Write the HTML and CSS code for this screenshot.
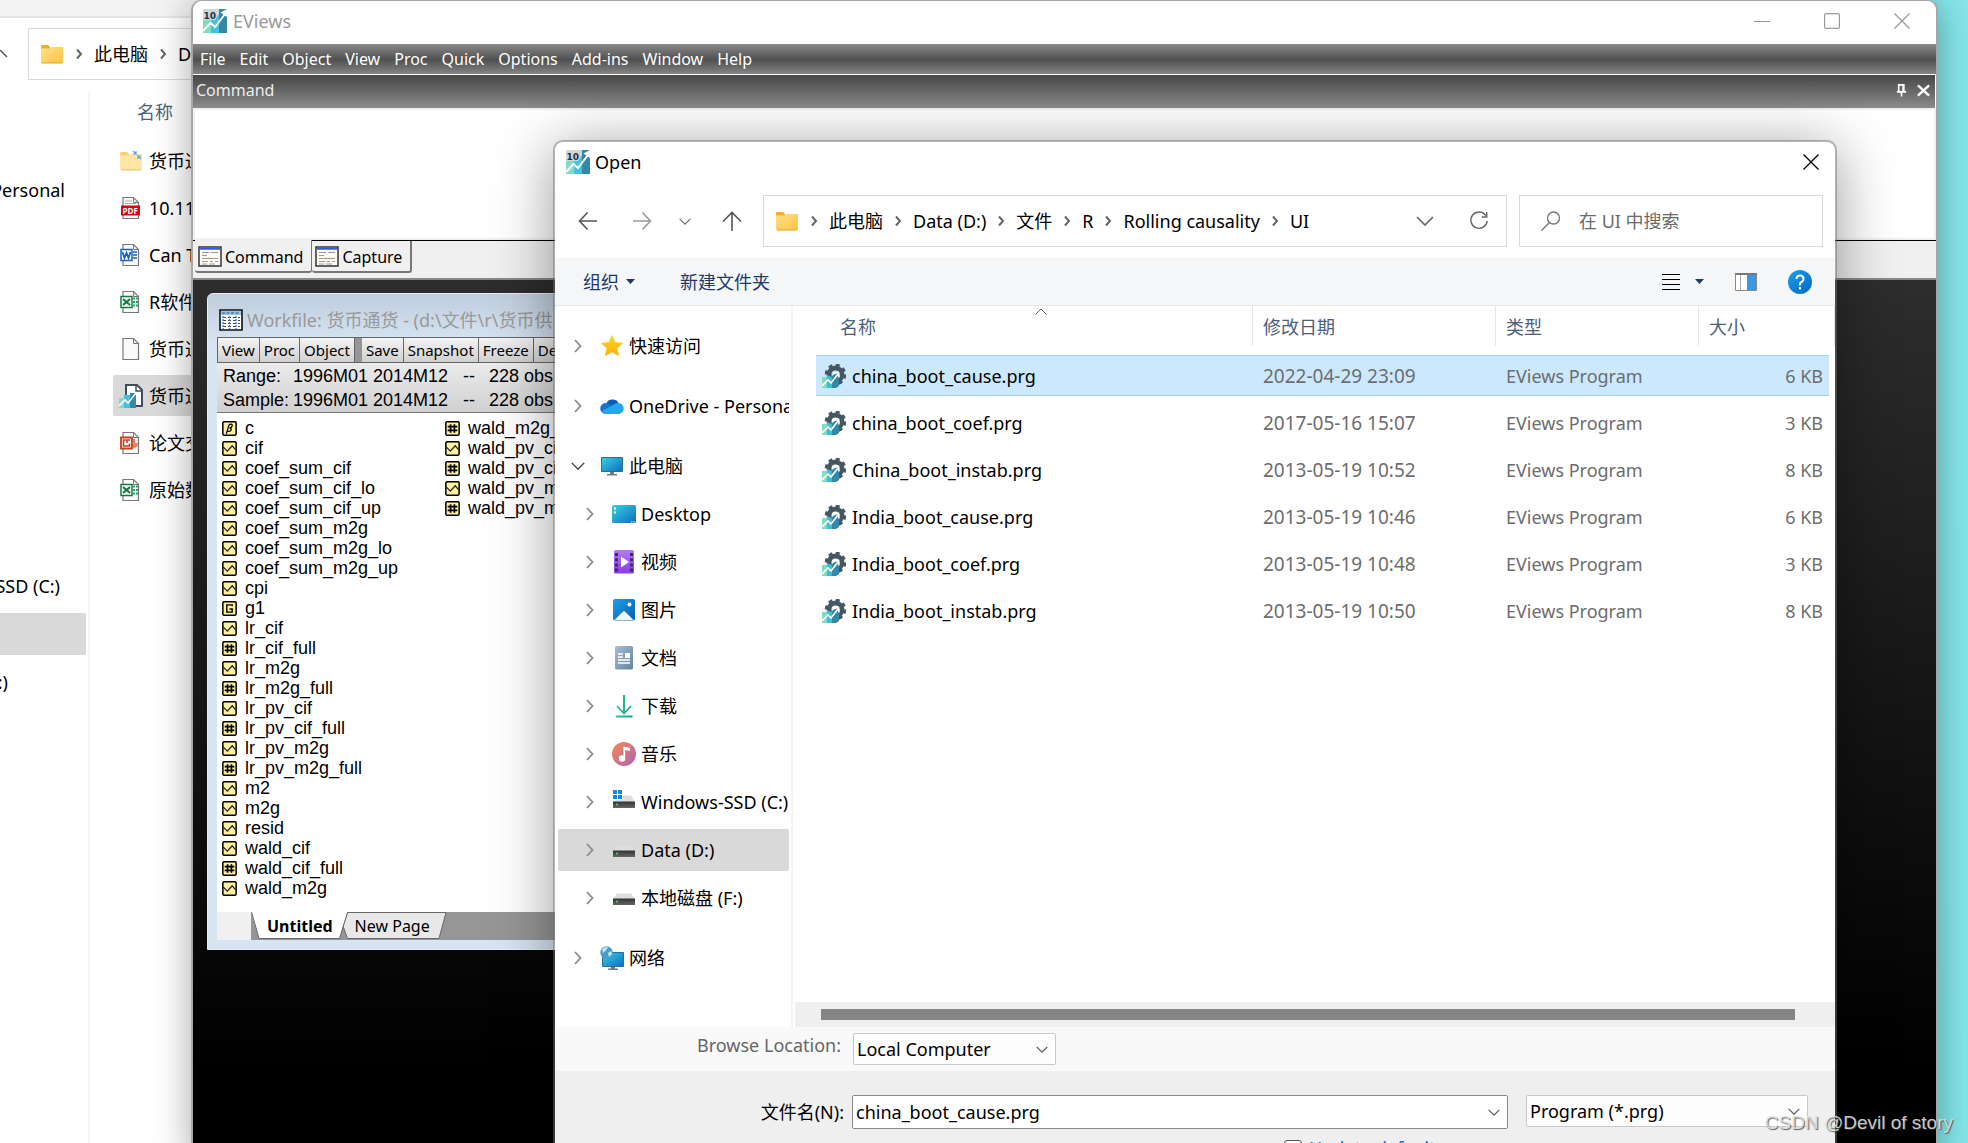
FILE: index.html
```html
<!DOCTYPE html>
<html lang="zh-CN">
<head>
<meta charset="utf-8">
<title>EViews - Open</title>
<link rel="stylesheet" href="styles.css">
</head>
<body>
<svg class="defs" aria-hidden="true">
  <defs>
    <linearGradient id="gFolder" x1="0" y1="0" x2="1" y2="1"><stop offset="0" stop-color="#ffe08c"/><stop offset="1" stop-color="#fdc440"/></linearGradient>
    <linearGradient id="gScreen" x1="0" y1="0" x2="1" y2="1"><stop offset="0" stop-color="#35d3e2"/><stop offset="1" stop-color="#0f6cbd"/></linearGradient>
    <linearGradient id="gVideo" x1="0" y1="0" x2="0" y2="1"><stop offset="0" stop-color="#b47af2"/><stop offset="1" stop-color="#8a3de6"/></linearGradient>
    <linearGradient id="gPhoto" x1="0" y1="0" x2="1" y2="1"><stop offset="0" stop-color="#1a9fe8"/><stop offset="1" stop-color="#0a5fb4"/></linearGradient>
    <linearGradient id="gDoc" x1="0" y1="0" x2="1" y2="1"><stop offset="0" stop-color="#a9bfd4"/><stop offset="1" stop-color="#65829f"/></linearGradient>
    <linearGradient id="gMusic" x1="0" y1="0" x2="1" y2="1"><stop offset="0" stop-color="#f48b54"/><stop offset="1" stop-color="#b062b4"/></linearGradient>
    <linearGradient id="gDown" x1="0" y1="0" x2="1" y2="0"><stop offset="0" stop-color="#34c878"/><stop offset="1" stop-color="#12a0a8"/></linearGradient>
    <linearGradient id="gStar" x1="0" y1="0" x2="0" y2="1"><stop offset="0" stop-color="#ffd91a"/><stop offset="1" stop-color="#fbb014"/></linearGradient>
    <linearGradient id="gHelp" x1="0" y1="0" x2="1" y2="1"><stop offset="0" stop-color="#1a9fe8"/><stop offset="1" stop-color="#0068c8"/></linearGradient>
    <linearGradient id="gDrive" x1="0" y1="0" x2="0" y2="1"><stop offset="0" stop-color="#333"/><stop offset="1" stop-color="#666"/></linearGradient>
  </defs>
  <symbol id="logo" viewBox="0 0 24 24">
    <path fill="#83dcc0" d="M0 10h8v14H0z"/><path fill="#45c1dd" d="M8 5h8v19H8z"/><path fill="#3388a8" d="M16 0h8v24h-8z"/>
    <path fill="#d3d6d8" d="M0 0h16v5l-4 6H0z"/>
    <text x="0.500" y="10" font-family="DejaVu Sans, sans-serif" font-size="9" font-weight="700" fill="#14344a">10</text>
    <path fill="none" stroke="#fff" stroke-width="2" d="M0 22l7.500-8 4.500 4L22 5"/><path fill="#fff" d="M17.500 3.500L24 0v8z"/>
  </symbol>
  <symbol id="prg" viewBox="0 0 24 24">
    <circle cx="13.500" cy="10.500" r="6.500" fill="none" stroke="#465764" stroke-width="5"/>
    <circle cx="13.500" cy="10.500" r="9.500" fill="none" stroke="#465764" stroke-width="2.600" stroke-dasharray="4 3.460"/>
    <path fill="#7edcc0" d="M0 13h5v11H0z"/><path fill="#3bbcd8" d="M5 11l5 2h3v11H5z"/><path fill="#3388a8" d="M10 12l7-5v15l-3 2h-4z"/>
    <path fill="none" stroke="#fff" stroke-width="1.600" d="M0 22l6-6 3 3 7-9M11.500 9.500l5-1 .5 5"/>
  </symbol>
  <symbol id="wf" viewBox="0 0 24 24">
    <path fill="#fff" stroke="#3d4f5d" stroke-width="2" d="M7 1h11l5 5v16H7z"/><path fill="none" stroke="#3d4f5d" stroke-width="1.500" d="M17 1v6h6"/>
    <path fill="#7edcc0" d="M0 14h5v10H0z"/><path fill="#45c1dd" d="M5 11h6v13H5z"/><path fill="#3388a8" d="M11 9h6v15h-6z"/>
    <path fill="none" stroke="#fff" stroke-width="1.600" d="M0 22l6-6 3 3 8-10"/>
  </symbol>
  <symbol id="folder" viewBox="0 0 24 24"><path fill="#f4b01c" d="M1 4q0-1 1-1h6l2 2v4H1z"/><path fill="url(#gFolder)" d="M1 6.500h9L11.500 5H23v15q0 1-1 1H2q-1 0-1-1z"/><path stroke="#e0a020" d="M2 21h20"/></symbol>
  <symbol id="folderopen" viewBox="0 0 24 24"><path fill="#f7d47c" d="M1 4q0-1 1-1h6l2 2v4H1z"/><path fill="#fde6a6" d="M1 6.500h9L11.500 5H23v15q0 1-1 1H2q-1 0-1-1z"/><path stroke="#e8c060" d="M2 21h20"/><path stroke="#58a8dc" stroke-width="1.200" fill="none" d="M14 2l3 3v-3M17 5h-3M22 10l-3-3v3M19 7h3"/></symbol>
  <symbol id="page" viewBox="0 0 24 24"><path fill="#fafafa" stroke="#777" stroke-width="1.200" d="M4 1.500h10.500l5 5v16H4z"/><path fill="none" stroke="#777" d="M14.500 1.500v5h5"/></symbol>
  <symbol id="pdf" viewBox="0 0 24 24"><use href="#page"/><path stroke="#aaa" d="M6 5h7M6 7.500h11"/><path fill="#e00012" d="M2 9.500h19v10H2z"/><text x="3.500" y="17.500" font-family="Open Sans, sans-serif" font-size="8" font-weight="700" fill="#fff">PDF</text></symbol>
  <symbol id="word" viewBox="0 0 24 24"><use href="#page"/><path stroke="#1a62c0" stroke-width="1.300" d="M14 9h4M14 12h4M14 15h4"/><path fill="#fff" stroke="#1a62c0" stroke-width="1.500" d="M2 6.500h11v11H2z"/><path fill="none" stroke="#1a62c0" stroke-width="1.800" d="M3.500 9l2 6 2-5 2 5 2-6"/></symbol>
  <symbol id="excel" viewBox="0 0 24 24"><use href="#page"/><path stroke="#21a565" stroke-width="1.800" stroke-dasharray="2 1" d="M14 8.500h5M14 12h5M14 15.500h5"/><path fill="#fff" stroke="#107c41" stroke-width="1.500" d="M2 6.500h11v11H2z"/><path stroke="#107c41" stroke-width="2.200" d="M4 9l7 6M11 9l-7 6"/></symbol>
  <symbol id="ppt" viewBox="0 0 24 24"><use href="#page"/><path fill="#f08060" d="M14 8h2v4h3v2q-1 3-5 3z"/><path fill="#fff" stroke="#c43e1c" stroke-width="1.800" d="M2 6.500h11v11H2z"/><path fill="none" stroke="#c43e1c" stroke-width="1.600" d="M7 9H4.500v6h6v-2.500M8 12V9h3"/></symbol>
  <symbol id="star" viewBox="0 0 24 24"><path fill="url(#gStar)" d="M12 .8l3.300 7.200 7.900.9-5.800 5.400 1.600 7.900-7-3.900-7 3.900 1.600-7.900L.8 8.900l7.900-.9z"/></symbol>
  <symbol id="cloud" viewBox="0 0 24 24"><path fill="#0a5db8" d="M6 10a7 7 0 0 1 13 0l-3 6H6z"/><path fill="#1473d0" d="M5.500 9Q9 9 11 11l8 6-13 3a5.500 5.500 0 0 1-.5-11z"/><path fill="#29a4ea" d="M2 17l11-6q2-2 5-2a5.500 5.500 0 0 1 .5 11H6q-3 0-4-3z"/></symbol>
  <symbol id="pc" viewBox="0 0 24 24"><path fill="url(#gScreen)" stroke="#2a6e96" d="M1.500 3.500h21v14h-21z"/><path fill="#6b7c88" d="M10 18h4v2h3v1.500H7V20h3z"/></symbol>
  <symbol id="desktop" viewBox="0 0 24 24"><rect y="3" width="24" height="18" rx="1.500" fill="url(#gScreen)"/><path fill="#fff" d="M2 5.500h2v2H2zM2 9.500h2v2H2z"/><path stroke="#fff" stroke-dasharray="1.500 1" d="M19 20h4"/></symbol>
  <symbol id="video" viewBox="0 0 24 24"><rect x="2" width="20" height="23.500" rx="1.500" fill="url(#gVideo)"/><path stroke="#42247a" stroke-width="3" stroke-dasharray="3 2.200" d="M4.500 3v19M19.500 3v19"/><path fill="#fff" d="M9 6.500l8 5.500-8 5.500z"/></symbol>
  <symbol id="photo" viewBox="0 0 24 24"><rect x="1" y="1" width="22" height="21.500" rx="2" fill="url(#gPhoto)"/><circle cx="17.500" cy="6.500" r="2" fill="#fff"/><path fill="#f2f7fb" d="M2.500 22L11 13.500q1-1 2 0L21.500 22z"/></symbol>
  <symbol id="doc" viewBox="0 0 24 24"><rect x="3" width="18" height="23.500" rx="1.500" fill="url(#gDoc)"/><path stroke="#fff" stroke-width="1.300" d="M6 8h5M6 11h5M6 14h12M6 17h12"/><path fill="#fff" d="M13 7h5v5h-5z"/></symbol>
  <symbol id="down" viewBox="0 0 24 24"><path fill="none" stroke="url(#gDown)" stroke-width="1.800" d="M5 12l7 7.500 7-7.500M4 22.500h16.500"/><path fill="#25b48c" d="M11 1h2v18h-2z"/></symbol>
  <symbol id="music" viewBox="0 0 24 24"><circle cx="12" cy="12" r="12" fill="url(#gMusic)"/><circle cx="10" cy="16.500" r="3.200" fill="#fff"/><path fill="#fff" d="M11.400 4.500l6.600 1.500v3l-4.800-1v8.500h-1.800z"/></symbol>
  <symbol id="drive" viewBox="0 0 24 24"><path fill="#dcdee2" d="M5 7.500h14L23 13H1z"/><path fill="url(#gDrive)" d="M1 12.500h22V19H1z"/><path fill="#2adf3c" d="M4 14.500h2v2H4z"/></symbol>
  <symbol id="windrive" viewBox="0 0 24 24"><path fill="#dcdee2" d="M11 5.500h8L23 12H1z"/><path fill="url(#gDrive)" d="M1 11.500h22V18H1z"/><path fill="#2adf3c" d="M4 13.500h2v2H4z"/><path fill="#fff" d="M0 0h11v10H0z"/><path fill="#1488dc" d="M1 0h4v4H1zM6 0h4v4H6zM1 5h4v4H1zM6 5h4v4H6z"/></symbol>
  <symbol id="network" viewBox="0 0 24 24"><path fill="url(#gScreen)" stroke="#2a6e96" d="M2.500 6.500h21v14h-21z"/><path fill="#6b7c88" d="M11 21h4v1.500h3V24H8v-1.500h3z"/><circle cx="6.500" cy="6.500" r="6.200" fill="#4a9cc8"/><path fill="#c4e6f4" d="M2 3.500Q5 0 8 1.500L5.500 5 3 7zM8 7l3-2 1 3-3 3z"/></symbol>
  <symbol id="right" viewBox="0 0 8 14"><path fill="none" stroke="currentColor" stroke-width="1.800" d="M1 1l5.500 6L1 13"/></symbol>
  <symbol id="crumb" viewBox="0 0 8 12"><path fill="none" stroke="currentColor" stroke-width="2" d="M2 1.500L6 6l-4 4.500"/></symbol>
  <symbol id="chev" viewBox="0 0 18 10"><path fill="none" stroke="currentColor" stroke-width="1.700" d="M1 1l8 8 8-8"/></symbol>
  <symbol id="caret" viewBox="0 0 9 5"><path fill="currentColor" d="M0 0h9L4.500 5z"/></symbol>
  <symbol id="close" viewBox="0 0 16 16"><path stroke="currentColor" stroke-width="1.300" d="M.5.5l15 15M15.500.5l-15 15"/></symbol>
  <symbol id="cmdwin" viewBox="0 0 24 21"><path fill="#fefbf0" stroke="#333" stroke-width="1.500" d="M1 1h22v19H1z"/><path stroke="#3355f0" stroke-width="1.800" d="M2 2.800h20"/><path stroke="#999" d="M4 6.500h7M13 6.500h7M4 9.500h5M4 12.500h16M4 15.500h6M12 15.500h3M17 15.500h3M4 18h5M11 18h6"/></symbol>
  <symbol id="series" viewBox="0 0 14 14"><rect x=".8" y=".8" width="12.400" height="12.400" rx="1" fill="#fdf0a0" stroke="#000" stroke-width="1.400"/><path fill="none" stroke="#222" stroke-width="1.200" d="M1 5.500L5 9.500 9.500 4.500l3.500 4"/></symbol>
  <symbol id="scalar" viewBox="0 0 14 14"><rect x=".8" y=".8" width="12.400" height="12.400" rx="1" fill="#fdf0a0" stroke="#000" stroke-width="1.400"/><path stroke="#000" stroke-width="1.600" d="M5.200 3v8M8.800 3v8M2.500 5.300h9M2.500 8.700h9"/></symbol>
  <symbol id="coef" viewBox="0 0 14 14"><rect x=".8" y=".8" width="12.400" height="12.400" rx="1" fill="#fdf0a0" stroke="#000" stroke-width="1.400"/><path fill="none" stroke="#000" stroke-width="1.200" d="M4 12L6.500 4Q7 3 8.500 3t.8 2Q9 6.500 7 6.500q2 0 1.500 2Q8 10 5 9.500"/></symbol>
  <symbol id="group" viewBox="0 0 14 14"><rect x=".8" y=".8" width="12.400" height="12.400" rx="1" fill="#fdf0a0" stroke="#000" stroke-width="1.400"/><path fill="none" stroke="#000" stroke-width="1.300" d="M9.500 5V3.600h-5v6.800h5V7.500H7"/></symbol>
</svg>

<div class="explorer">
  <div class="ex-top"></div>
  <div class="ex-bar">
    <svg class="ex-up" viewBox="0 0 8 8"><path fill="none" stroke="#555" stroke-width="1.500" d="M0 0l7 7"/></svg>
    <div class="ex-address">
      <svg class="i24"><use href="#folder"/></svg>
      <svg class="crumb"><use href="#crumb"/></svg><a href="#">此电脑</a>
      <svg class="crumb"><use href="#crumb"/></svg><a href="#">D</a>
    </div>
  </div>
  <div class="ex-body">
    <ul class="ex-nav">
      <li class="personal">OneDrive - Personal</li>
      <li>Windows-SSD (C:)</li>
      <li class="on"></li>
      <li class="last">(F:)</li>
    </ul>
    <div class="ex-files">
      <div class="ex-head">名称</div>
      <ul>
        <li><svg class="i24"><use href="#folderopen"/></svg>货币通</li>
        <li><svg class="i24"><use href="#pdf"/></svg>10.11</li>
        <li><svg class="i24"><use href="#word"/></svg>Can T</li>
        <li><svg class="i24"><use href="#excel"/></svg>R软件</li>
        <li><svg class="i24"><use href="#page"/></svg>货币通</li>
        <li class="on"><svg class="i24"><use href="#wf"/></svg>货币通</li>
        <li><svg class="i24"><use href="#ppt"/></svg>论文交</li>
        <li><svg class="i24"><use href="#excel"/></svg>原始数</li>
      </ul>
    </div>
  </div>
</div>

<main class="eviews">
  <header class="titlebar">
    <svg class="i24"><use href="#logo"/></svg><h1>EViews</h1>
    <div class="winbtns">
      <button aria-label="Minimize"><svg viewBox="0 0 16 16"><path stroke="currentColor" stroke-width="1.200" d="M0 8.500h16"/></svg></button>
      <button aria-label="Maximize"><svg viewBox="0 0 16 16"><rect x=".6" y=".6" width="14.800" height="14.800" rx="1.500" fill="none" stroke="currentColor" stroke-width="1.200"/></svg></button>
      <button aria-label="Close"><svg><use href="#close"/></svg></button>
    </div>
  </header>
  <nav class="menubar">
    <button>File</button><button>Edit</button><button>Object</button><button>View</button><button>Proc</button><button>Quick</button><button>Options</button><button>Add-ins</button><button>Window</button><button>Help</button>
  </nav>
  <section class="command">
    <div class="cmd-title"><h2>Command</h2>
      <button aria-label="Pin"><svg viewBox="0 0 12 14"><path fill="none" stroke="#fff" stroke-width="1.800" d="M3 8V1h5.500v7M1 8.500h10M6 9v4.500M7.700 1v7"/></svg></button>
      <button aria-label="Close"><svg viewBox="0 0 14 14"><path stroke="#fff" stroke-width="2.600" d="M1 1.500l12 11M13 1.500l-12 11"/></svg></button>
    </div>
    <textarea aria-label="Command"></textarea>
    <div class="cmd-tabs">
      <button class="on"><svg><use href="#cmdwin"/></svg>Command</button><button><svg><use href="#cmdwin"/></svg>Capture</button>
    </div>
  </section>
  <div class="mdi">
    <section class="workfile">
      <header><svg viewBox="0 0 24 22"><path fill="#fff" stroke="#111" stroke-width="1.600" d="M1 1h22v20H1z"/><path fill="#8cc8ea" d="M2 2h20v4H2z"/><path stroke="#456" stroke-dasharray="3 1.500" d="M3 4h18"/><path stroke="#444" stroke-dasharray="3 2" d="M4 8.500h17M4 11.500h17M4 14.500h17M4 17.500h17"/><path stroke="#2a7be0" stroke-width="1.300" stroke-dasharray="2 1" d="M4 7v13M10.500 7v13M17 7v13"/></svg><h2>Workfile: 货币通货 - (d:\文件\r\货币供</h2></header>
      <div class="wf-tools">
        <button>View</button><button>Proc</button><button class="gap">Object</button><button>Save</button><button>Snapshot</button><button>Freeze</button><button>Details+/-</button>
      </div>
      <div class="wf-info">
        <span>Range:</span><span>1996M01 2014M12</span><span>--</span><span>228 obs</span>
        <span>Sample:</span><span>1996M01 2014M12</span><span>--</span><span>228 obs</span>
      </div>
      <ul class="wf-list">
        <li><svg><use href="#coef"/></svg>c</li>
        <li><svg><use href="#series"/></svg>cif</li>
        <li><svg><use href="#series"/></svg>coef_sum_cif</li>
        <li><svg><use href="#series"/></svg>coef_sum_cif_lo</li>
        <li><svg><use href="#series"/></svg>coef_sum_cif_up</li>
        <li><svg><use href="#series"/></svg>coef_sum_m2g</li>
        <li><svg><use href="#series"/></svg>coef_sum_m2g_lo</li>
        <li><svg><use href="#series"/></svg>coef_sum_m2g_up</li>
        <li><svg><use href="#series"/></svg>cpi</li>
        <li><svg><use href="#group"/></svg>g1</li>
        <li><svg><use href="#series"/></svg>lr_cif</li>
        <li><svg><use href="#scalar"/></svg>lr_cif_full</li>
        <li><svg><use href="#series"/></svg>lr_m2g</li>
        <li><svg><use href="#scalar"/></svg>lr_m2g_full</li>
        <li><svg><use href="#series"/></svg>lr_pv_cif</li>
        <li><svg><use href="#scalar"/></svg>lr_pv_cif_full</li>
        <li><svg><use href="#series"/></svg>lr_pv_m2g</li>
        <li><svg><use href="#scalar"/></svg>lr_pv_m2g_full</li>
        <li><svg><use href="#series"/></svg>m2</li>
        <li><svg><use href="#series"/></svg>m2g</li>
        <li><svg><use href="#series"/></svg>resid</li>
        <li><svg><use href="#series"/></svg>wald_cif</li>
        <li><svg><use href="#scalar"/></svg>wald_cif_full</li>
        <li><svg><use href="#series"/></svg>wald_m2g</li>
        <li><svg><use href="#scalar"/></svg>wald_m2g_full</li>
        <li><svg><use href="#series"/></svg>wald_pv_cif</li>
        <li><svg><use href="#scalar"/></svg>wald_pv_cif_full</li>
        <li><svg><use href="#series"/></svg>wald_pv_m2g</li>
        <li><svg><use href="#scalar"/></svg>wald_pv_m2g_full</li>
      </ul>
      <div class="wf-pages">
        <svg viewBox="0 0 200 27"><path fill="#e8e8e8" stroke="#666" d="M96.500.5H195l-7 26H96.500L92 14z"/><path fill="#fff" d="M0 0h96.500l-8 26.500H8z"/><path fill="none" stroke="#666" d="M.5 0L8 26.500h80.500l8-26"/></svg>
        <div class="pages"><button class="on">Untitled</button><button>New Page</button></div>
      </div>
    </section>
  </div>
</main>

<section class="dialog" role="dialog" aria-label="Open">
  <header class="dlg-title"><svg class="i24"><use href="#logo"/></svg><h2>Open</h2><button aria-label="Close"><svg><use href="#close"/></svg></button></header>
  <div class="dlg-nav">
    <button aria-label="Back"><svg viewBox="0 0 20 20"><path fill="none" stroke="#555" stroke-width="1.600" d="M19 10H1.500M9.500 1.500L1.500 10l8 8.500"/></svg></button>
    <button aria-label="Forward"><svg viewBox="0 0 20 20"><path fill="none" stroke="#999" stroke-width="1.600" d="M1 10h17.500M10.500 1.500l8 8.500-8 8.500"/></svg></button>
    <button aria-label="Recent"><svg class="small"><use href="#chev"/></svg></button>
    <button aria-label="Up"><svg viewBox="0 0 20 20"><path fill="none" stroke="#555" stroke-width="1.600" d="M10 20V1.500M1 10.500l9-9 9 9"/></svg></button>
    <div class="address">
      <svg class="i24"><use href="#folder"/></svg>
      <svg class="crumb"><use href="#crumb"/></svg><a href="#">此电脑</a>
      <svg class="crumb"><use href="#crumb"/></svg><a href="#">Data (D:)</a>
      <svg class="crumb"><use href="#crumb"/></svg><a href="#">文件</a>
      <svg class="crumb"><use href="#crumb"/></svg><a href="#">R</a>
      <svg class="crumb"><use href="#crumb"/></svg><a href="#">Rolling causality</a>
      <svg class="crumb"><use href="#crumb"/></svg><a href="#">UI</a>
      <button class="drop" aria-label="Previous locations"><svg><use href="#chev"/></svg></button>
      <button aria-label="Refresh"><svg class="refresh" viewBox="0 0 22 22"><path fill="none" stroke="#666" stroke-width="1.600" d="M18.500 5A9 9 0 1 0 20 11M19.500 1v5.500H14"/></svg></button>
    </div>
    <label class="search"><svg viewBox="0 0 20 20"><circle cx="12.500" cy="7" r="6" fill="none" stroke="#777" stroke-width="1.400"/><path stroke="#777" stroke-width="1.400" d="M8.500 11.500L.5 19.500"/></svg><input type="search" placeholder="在 UI 中搜索" aria-label="在 UI 中搜索"></label>
  </div>
  <div class="dlg-tools">
    <button>组织<svg class="caret"><use href="#caret"/></svg></button>
    <button class="new">新建文件夹</button>
    <button class="view" aria-label="View"><svg class="lines" viewBox="0 0 20 20"><path stroke="#000" d="M1 2.500h18M1 7.500h18M1 12.500h18M1 17.500h18"/></svg><svg class="caret"><use href="#caret"/></svg></button>
    <button aria-label="Preview pane"><svg class="pane" viewBox="0 0 22 18"><path fill="#fff" stroke="#888" d="M.5.5h21v17H.5z"/><path stroke="#777" stroke-width="2" d="M0 1h22"/><path fill="#3c98e4" d="M12 2h9v15h-9z"/><path stroke="#aaa" d="M5.500 2v15"/></svg></button>
    <button aria-label="Help"><svg class="i24" viewBox="0 0 24 24"><circle cx="12" cy="12" r="12" fill="url(#gHelp)"/><path fill="none" stroke="#fff" stroke-width="2" d="M8.500 9q0-3.500 3.500-3.500T15.500 9q0 2-2 3T12 15.500M12 17v2.200"/></svg></button>
  </div>
  <div class="dlg-body">
    <ul class="tree">
      <li><svg class="exp"><use href="#right"/></svg><svg class="i24"><use href="#star"/></svg>快速访问</li>
      <li class="top"><svg class="exp"><use href="#right"/></svg><svg class="i24"><use href="#cloud"/></svg>OneDrive - Personal</li>
      <li class="top open"><svg class="exp"><use href="#chev"/></svg><svg class="i24"><use href="#pc"/></svg>此电脑</li>
      <li class="sub"><svg class="exp"><use href="#right"/></svg><svg class="i24"><use href="#desktop"/></svg>Desktop</li>
      <li class="sub"><svg class="exp"><use href="#right"/></svg><svg class="i24"><use href="#video"/></svg>视频</li>
      <li class="sub"><svg class="exp"><use href="#right"/></svg><svg class="i24"><use href="#photo"/></svg>图片</li>
      <li class="sub"><svg class="exp"><use href="#right"/></svg><svg class="i24"><use href="#doc"/></svg>文档</li>
      <li class="sub"><svg class="exp"><use href="#right"/></svg><svg class="i24"><use href="#down"/></svg>下载</li>
      <li class="sub"><svg class="exp"><use href="#right"/></svg><svg class="i24"><use href="#music"/></svg>音乐</li>
      <li class="sub"><svg class="exp"><use href="#right"/></svg><svg class="i24"><use href="#windrive"/></svg>Windows-SSD (C:)</li>
      <li class="sub on"><svg class="exp"><use href="#right"/></svg><svg class="i24"><use href="#drive"/></svg>Data (D:)</li>
      <li class="sub"><svg class="exp"><use href="#right"/></svg><svg class="i24"><use href="#drive"/></svg>本地磁盘 (F:)</li>
      <li class="top"><svg class="exp"><use href="#right"/></svg><svg class="i24"><use href="#network"/></svg>网络</li>
    </ul>
    <div class="files">
      <table>
        <thead><tr><th class="c-name">名称<svg class="sort" viewBox="0 0 12 7"><path fill="none" stroke="#666" d="M.5 6.500L6 1l5.500 5.500"/></svg></th><th class="c-date">修改日期</th><th class="c-type">类型</th><th class="c-size">大小</th></tr></thead>
        <tbody>
          <tr class="on"><td><span><svg class="i24"><use href="#prg"/></svg>china_boot_cause.prg</span></td><td>2022-04-29 23:09</td><td>EViews Program</td><td>6 KB</td></tr>
          <tr><td><span><svg class="i24"><use href="#prg"/></svg>china_boot_coef.prg</span></td><td>2017-05-16 15:07</td><td>EViews Program</td><td>3 KB</td></tr>
          <tr><td><span><svg class="i24"><use href="#prg"/></svg>China_boot_instab.prg</span></td><td>2013-05-19 10:52</td><td>EViews Program</td><td>8 KB</td></tr>
          <tr><td><span><svg class="i24"><use href="#prg"/></svg>India_boot_cause.prg</span></td><td>2013-05-19 10:46</td><td>EViews Program</td><td>6 KB</td></tr>
          <tr><td><span><svg class="i24"><use href="#prg"/></svg>India_boot_coef.prg</span></td><td>2013-05-19 10:48</td><td>EViews Program</td><td>3 KB</td></tr>
          <tr><td><span><svg class="i24"><use href="#prg"/></svg>India_boot_instab.prg</span></td><td>2013-05-19 10:50</td><td>EViews Program</td><td>8 KB</td></tr>
        </tbody>
      </table>
      <div class="hscroll"><div class="thumb"></div></div>
    </div>
  </div>
  <div class="browse">
    <label for="loc">Browse Location:</label>
    <div class="pick"><select id="loc"><option>Local Computer</option></select><svg><use href="#chev"/></svg></div>
  </div>
  <div class="dlg-foot">
    <div class="name-row">
      <label for="fname">文件名(N):</label>
      <div class="pick name"><input id="fname" type="text" value="china_boot_cause.prg"><svg><use href="#chev"/></svg></div>
      <div class="pick type"><select aria-label="File type"><option>Program (*.prg)</option></select><svg><use href="#chev"/></svg></div>
    </div>
    <label class="update"><input type="checkbox">Update default</label>
  </div>
</section>
<div class="watermark">CSDN @Devil of story</div>
</body>
</html>
```
FILE: styles.css
```css
* { box-sizing: border-box; }
body {
  margin: 0;
  height: 100vh;
  position: relative;
  overflow: hidden;
  background: linear-gradient(110deg, #90e8ee, #84e6ea);
  font: 18px/24px "Noto Sans", "Noto Sans CJK SC", sans-serif;
  color: #000;
}
ul { list-style: none; margin: 0; padding: 0; }
h1, h2 { margin: 0; font-size: inherit; font-weight: 400; }
a { color: inherit; text-decoration: none; }
button {
  border: 0; padding: 0; background: none; color: inherit;
  font: inherit; display: flex; align-items: center; white-space: nowrap;
}
input, select, textarea { font: inherit; color: inherit; border: 0; padding: 0; margin: 0; outline: 0; }
svg { display: block; flex: none; }
.defs { position: absolute; width: 0; height: 0; }
.i24 { width: 24px; height: 24px; }
.crumb { width: 8px; height: 12px; color: #666; }

/* file manager at the back */
.explorer { position: absolute; left: 0; top: 0; bottom: 0; width: 20%; background: #fff; overflow: hidden; }
.ex-top { height: 18px; background: #f3f3f3; border-bottom: 2px solid #e5e5e5; }
.ex-bar { display: flex; align-items: center; padding-top: 10px; }
.ex-up { width: 8px; height: 8px; margin-right: 20px; }
.ex-address {
  flex: 1; height: 52px; border: 1px solid #d9d9d9; white-space: nowrap;
  display: flex; align-items: center; gap: 11px; padding-left: 11px;
}
.ex-body { display: flex; margin-top: 11px; height: 100%; }
.ex-nav { width: 90px; border-right: 2px solid #f5f5f5; padding-top: 78px; overflow: hidden; }
.ex-nav li {
  height: 42px; margin-bottom: 6px; margin-right: 28px; white-space: nowrap;
  display: flex; align-items: center; justify-content: flex-end;
}
.ex-nav .personal { margin-bottom: 354px; margin-right: 23px; }
.ex-nav .on { background: #d9d9d9; margin-right: 2px; border-radius: 0 2px 2px 0; }
.ex-nav .last { margin-right: 80px; }
.ex-files { flex: 1; padding-left: 23px; white-space: nowrap; }
.ex-head { height: 49px; line-height: 42px; padding-left: 24px; color: #4c607a; }
.ex-files li { height: 41px; margin-bottom: 6px; padding-left: 6px; display: flex; align-items: center; gap: 6px; }
.ex-files .on { background: #d9d9d9; border-radius: 2px; }

/* EViews main window */
.eviews {
  position: absolute; left: 191px; right: 30px; top: 0; bottom: -20px;
  display: flex; flex-direction: column; overflow: hidden;
  background: #fff; border: 2px solid #a6a6a6; border-top-width: 1px; border-radius: 10px;
  box-shadow: 0 4px 36px rgba(0, 0, 0, .35);
}
.titlebar { height: 43px; flex: none; display: flex; align-items: center; gap: 6px; padding: 0 26px 3px 10px; color: #999; }
.winbtns { margin-left: auto; display: flex; gap: 54px; }
.winbtns svg { width: 16px; height: 16px; }
.menubar {
  height: 31px; flex: none; display: flex; gap: 14px; padding-left: 7px;
  color: #fff; font-size: 16px; border-bottom: 1px solid #fff;
  background: linear-gradient(#8a8a8a, #505050 52%, #848484);
}
.command { flex: none; background: #f0f0f0; }
.cmd-title {
  height: 33px; display: flex; align-items: center; padding: 0 5px 3px 3px;
  border: solid #fff; border-width: 0 1px 0 0; color: #ececec; font-size: 16px;
  background: linear-gradient(#464646, #8c8c8c);
}
.cmd-title h2 { margin-right: auto; }
.cmd-title svg { width: 13px; height: 13px; margin-left: 9px; }
textarea { display: block; width: calc(100% - 4px); height: 130px; margin: 0 2px; border-top: 2px solid #f0f0f0; background: #fff; resize: none; }
.cmd-tabs { height: 40px; border-top: 1px solid #000; border-bottom: 2px solid #888; display: flex; margin-top: 2px; }
.cmd-tabs button { height: 32px; padding: 1px 8px 0 3px; gap: 3px; font-size: 16px; border: solid #777; border-width: 0 2px 2px 0; border-radius: 0 0 3px 3px; background: #f0f0f0; }
.cmd-tabs .on { margin: -1px 0 0 2px; height: 33px; padding-top: 2px; border-right-width: 1px; }
.cmd-tabs button svg { width: 24px; height: 21px; }
.mdi { flex: 1; position: relative; background: linear-gradient(#2d2d2d, #000 90%); }
.workfile {
  position: absolute; left: 14px; top: 13px; width: 40%;
  border: 1px solid #e8eef4; border-radius: 6px 6px 0 0; padding: 0 8px 9px 9px;
  background: linear-gradient(#c0cddc, #d7e4f2 50px);
}
.workfile header { height: 43px; padding: 9px 0 0 2px; display: flex; align-items: center; gap: 4px; color: #999; white-space: nowrap; overflow: hidden; }
.workfile header svg { width: 24px; height: 22px; }
.wf-tools { display: flex; height: 26px; background: #969696; border: solid #666; border-width: 1px 0 1px 1px; }
.wf-tools button { padding: 0 4px; font-size: 15px; border-right: 1px solid #666; background: linear-gradient(#f4f4f4, #d0d0d0); }
.wf-tools .gap { margin-right: 7px; }
.wf-info {
  height: 50px; padding: 1px 6px; border-bottom: 1px solid #777; background: linear-gradient(#ebebeb, #d0d0d0);
  display: grid; grid-template-columns: 70px 170px 26px auto; grid-auto-rows: 24px;
  font-family: "Liberation Sans", Arial, sans-serif;
}
.wf-list {
  height: 499px; padding: 5px; background: #fff; font: 18px/20px "Liberation Sans", Arial, sans-serif;
  display: grid; grid-template-rows: repeat(24, 20px); grid-auto-flow: column; grid-auto-columns: 223px;
}
.wf-list li { display: flex; align-items: center; gap: 8px; }
.wf-list svg { width: 15px; height: 15px; }
.wf-pages { height: 28px; background: #969696; border-left: 34px solid #f0f0f0; display: grid; }
.wf-pages > * { grid-area: 1 / 1; }
.wf-pages svg { width: 200px; height: 27px; }
.pages { display: flex; padding-left: 16px; gap: 22px; font-size: 16px; }
.pages .on { font-weight: 700; }

/* Open dialog */
.dialog {
  position: absolute; left: 553px; right: 131px; top: 140px; bottom: -60px;
  display: flex; flex-direction: column; overflow: hidden;
  background: #fff; background-clip: padding-box;
  border: 2px solid rgba(110, 110, 110, .5); border-radius: 10px;
  box-shadow: 0 8px 60px rgba(0, 0, 0, .4);
}
.dlg-title { height: 40px; flex: none; display: flex; align-items: center; gap: 5px; padding: 0 16px 0 11px; }
.dlg-title button { margin-left: auto; }
.dlg-title button svg { width: 16px; height: 16px; }
.dlg-nav {
  flex: none; padding: 13px 12px 11px 23px; display: grid;
  grid-template-columns: 54px 47px 43px 41px minmax(0, 1fr) 304px; align-items: center;
}
.dlg-nav button svg { width: 20px; height: 20px; color: #666; }
.dlg-nav button .small { width: 12px; height: 7px; }
.address, .search { height: 52px; border: 1px solid #d9d9d9; display: flex; align-items: center; white-space: nowrap; }
.address { margin-right: 12px; padding: 0 17px 0 11px; gap: 11px; }
.address .drop { margin: 0 24px 0 auto; }
.address .drop svg { width: 18px; height: 10px; }
.search svg { width: 20px; height: 20px; margin: 0 18px 0 21px; }
.search input { flex: 1; min-width: 0; background: none; }
.search input::placeholder { color: #6b6b6b; opacity: 1; }
.dlg-tools { height: 48px; flex: none; display: flex; align-items: center; padding: 0 23px 0 28px; gap: 31px; background: #f4f6f8; border-bottom: 1px solid #e5e7ea; color: #1e3a66; }
.caret { width: 9px; height: 5px; margin-left: 7px; }
.dlg-tools .new { margin-left: 14px; }
.dlg-tools .view { margin-left: auto; }
.view .caret { margin-left: 14px; }
.lines { width: 20px; height: 20px; }
.pane { width: 22px; height: 18px; }
.dlg-body { flex: 1; display: flex; min-height: 0; }
.tree { width: 238px; flex: none; border-right: 2px solid #f5f5f5; padding: 19px 2px 0 3px; }
.tree li { height: 42px; margin-bottom: 6px; padding-left: 16px; display: flex; align-items: center; gap: 5px; overflow: hidden; white-space: nowrap; border-radius: 2px; }
.tree .top { margin-top: 18px; }
.tree .sub { padding-left: 28px; }
.tree .on { background: #d9d9d9; }
.exp { width: 8px; height: 14px; margin-right: 13px; color: #8a8a8a; }
.open .exp { width: 14px; height: 8px; margin: 0 10px 0 -3px; color: #333; }
.files { flex: 1; min-width: 0; display: flex; flex-direction: column; }
table { margin-left: 23px; border-collapse: separate; border-spacing: 0; table-layout: fixed; }
th {
  height: 46px; padding: 0 10px; vertical-align: top; text-align: left; font-weight: 400; line-height: 42px; color: #4c607a;
  background: linear-gradient(#e5e5e5, #e5e5e5) right top / 1px 40px no-repeat;
}
.c-name { padding-left: 24px; position: relative; }
.c-date { width: 243px; }
.c-type { width: 203px; }
.c-size { width: 136px; }
.sort { position: absolute; left: 50%; top: 2px; width: 12px; height: 7px; }
td { height: 47px; padding: 0 10px; border: solid transparent; border-width: 3px 0; background-clip: padding-box; color: #6d6d6d; }
td:first-child { padding-left: 6px; color: #000; }
td:nth-child(2) { font-size: 19px; }
td:last-child { text-align: right; padding-right: 6px; border-right-width: 6px; }
td span { display: flex; align-items: center; gap: 6px; }
.on td { background-color: #cce8ff; box-shadow: inset 0 1px #99d1ff, inset 0 -1px #99d1ff; }
.hscroll { margin: auto 0 0 2px; height: 25px; padding: 7px 40px 7px 26px; background: #efefef; }
.thumb { height: 11px; background: #858585; }
.browse { height: 44px; flex: none; padding-top: 6px; display: flex; gap: 12px; background: #f9f9f9; }
.browse label { width: 286px; text-align: right; color: #666; }
.pick { display: grid; align-items: center; width: 203px; height: 32px; background: #fdfdfd; border: 1px solid #c8c8c8; border-radius: 2px; }
.pick > * { grid-area: 1 / 1; }
.pick select, .pick input { appearance: none; width: 100%; height: 100%; padding-left: 3px; background: none; }
.pick svg { width: 12px; height: 7px; margin-right: 7px; justify-self: end; color: #555; pointer-events: none; }
.dlg-foot { height: 130px; flex: none; padding: 24px 27px 0 0; background: #efefef; }
.name-row { display: flex; }
.name-row > label { width: 289px; margin-right: 8px; text-align: right; line-height: 34px; }
.pick.name { flex: 1; height: 34px; margin-right: 18px; background: #fff; border-color: #888; }
.pick.type { width: 282px; }
.update { display: flex; align-items: center; gap: 7px; margin: 7px 0 0 729px; color: #0066cc; }
.update input { appearance: none; width: 18px; height: 16px; border: 1px solid #555; border-radius: 3px; background: #fff; }
.watermark {
  position: absolute; right: 15px; bottom: 8px;
  font-family: "Liberation Sans", Arial, sans-serif; font-size: 19px;
  color: rgba(225, 225, 225, .9); text-shadow: 1px 1px 1px rgba(60, 60, 60, .8);
}
```
